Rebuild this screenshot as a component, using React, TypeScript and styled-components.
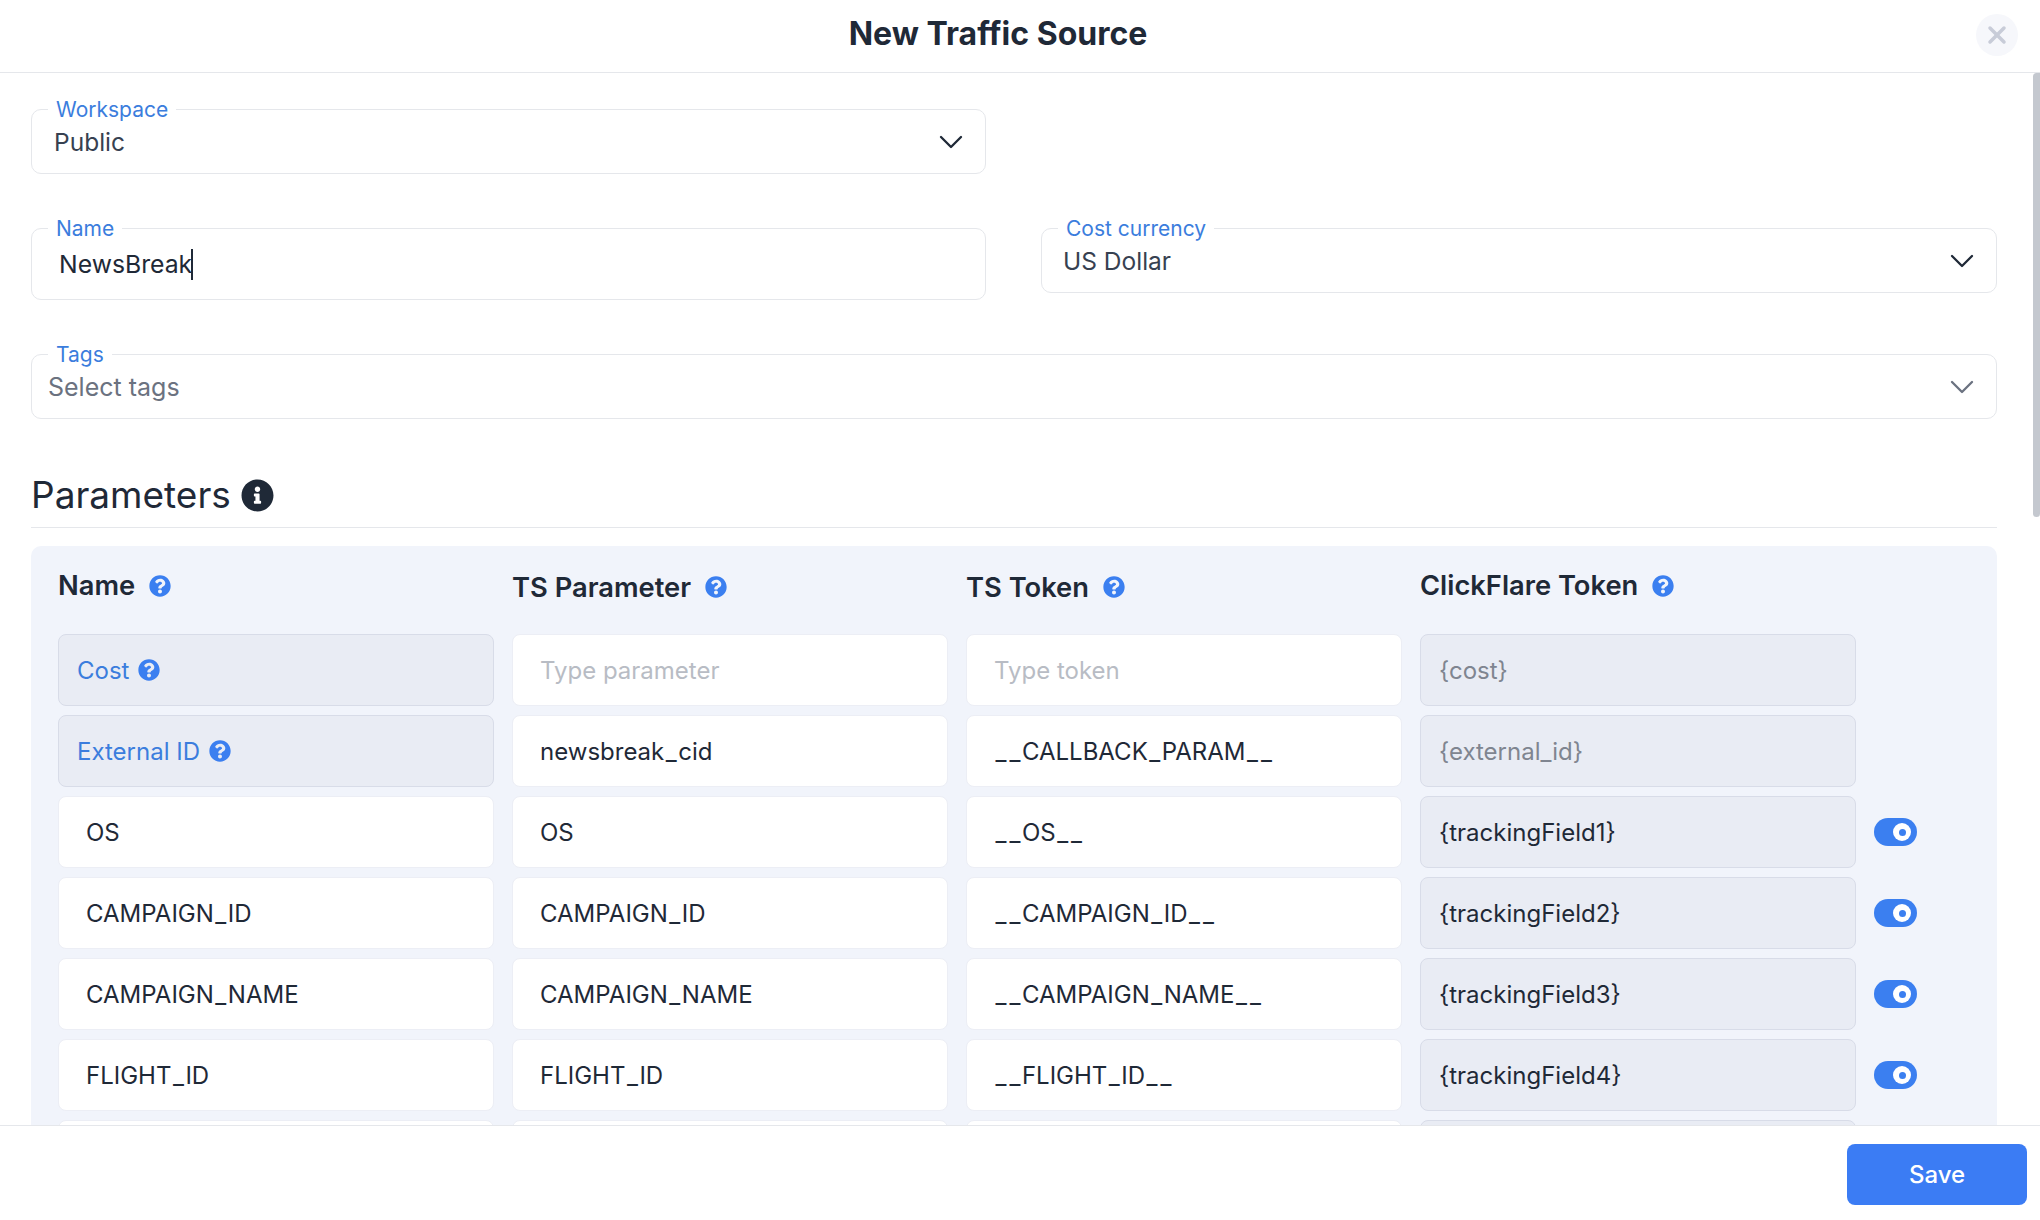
import { FC } from 'react';
import styled, { createGlobalStyle } from 'styled-components';
import { ChevronDown, X } from 'lucide-react';
import { FaInfoCircle, FaQuestionCircle } from 'react-icons/fa';

const GlobalStyle = createGlobalStyle`
  html, body {
    margin: 0;
    padding: 0;
    background: #ffffff;
  }
  * {
    box-sizing: border-box;
  }
  body {
    font-family: Inter, "Liberation Sans", sans-serif;
    color: #1f2937;
  }
`;

const Page = styled.div`
  display: flex;
  flex-direction: column;
  width: 2040px;
  height: 1220px;
  overflow: hidden;
  background: #ffffff;
`;

const Header = styled.header`
  position: relative;
  flex: none;
  display: flex;
  align-items: center;
  justify-content: center;
  height: 73px;
  padding: 0 44px 5px 0;
  border-bottom: 1px solid #e5e7eb;
`;

const Title = styled.h1`
  margin: 0;
  font-size: 32px;
  font-weight: 700;
  color: #1f2937;
`;

const CloseButton = styled.button`
  position: absolute;
  top: 14px;
  right: 22px;
  display: flex;
  align-items: center;
  justify-content: center;
  width: 42px;
  height: 42px;
  padding: 0;
  border: 0;
  border-radius: 50%;
  background: #f6f7fb;
  color: #c8ccd8;
`;

const Body = styled.main`
  position: relative;
  flex: 1;
  min-height: 0;
  overflow: hidden;
  padding: 36px 43px 0 31px;
`;

const ScrollThumb = styled.div`
  position: absolute;
  top: 0;
  right: 0;
  width: 7px;
  height: 444px;
  border-radius: 4px 0 4px 4px;
  background: #c4c8cf;
`;

const FormRow = styled.div<{ $gap?: number }>`
  display: grid;
  grid-template-columns: 955px 956px;
  column-gap: 55px;
  align-items: start;
  margin-bottom: ${(p) => p.$gap ?? 54}px;
`;

const Field = styled.div<{ $wide?: boolean; $height?: number }>`
  position: relative;
  display: flex;
  align-items: center;
  justify-content: space-between;
  height: ${(p) => p.$height ?? 65}px;
  padding: 0 14px 0 22px;
  border: 1px solid #e5e7eb;
  border-radius: 10px;
  background: #ffffff;
  grid-column: ${(p) => (p.$wide ? '1 / -1' : 'auto')};
`;

const FieldLabel = styled.label`
  position: absolute;
  top: -13px;
  left: 16px;
  padding: 0 8px;
  background: #ffffff;
  font-size: 21px;
  line-height: 26px;
  color: #3b7ddd;
`;

const FieldValue = styled.span<{ $muted?: boolean; $left?: number }>`
  margin-left: ${(p) => p.$left ?? 0}px;
  font-size: ${(p) => (p.$muted ? 25 : 24.5)}px;
  line-height: 30px;
  color: ${(p) => (p.$muted ? '#6b7280' : '#374151')};
`;

const TypedValue = styled.div`
  display: flex;
  align-items: center;
  margin-left: 5px;
  font-size: 24.75px;
  color: #1f2937;
`;

const Caret = styled.span`
  display: inline-block;
  width: 2px;
  height: 31px;
  margin-left: -1px;
  background: #1f2937;
`;

const Chevron = styled(ChevronDown)<{ $muted?: boolean }>`
  flex: none;
  color: ${(p) => (p.$muted ? '#6b7280' : '#1f2937')};
`;

const SectionTitle = styled.h2`
  display: flex;
  align-items: center;
  gap: 10px;
  margin: 0;
  padding: 0 0 7px;
  border-bottom: 1px solid #e5e7eb;
  font-size: 37px;
  line-height: 50px;
  font-weight: 400;
  color: #1f2937;
`;

const Panel = styled.section`
  display: grid;
  grid-template-columns: repeat(4, 436px) auto;
  column-gap: 18px;
  row-gap: 9px;
  margin-top: 18px;
  padding: 0 0 0 27px;
  border-radius: 10px;
  background: #f1f4fb;
`;

const ColumnHead = styled.div<{ $shift?: number }>`
  display: flex;
  align-items: center;
  gap: 14px;
  height: 79px;
  padding-top: ${(p) => p.$shift ?? 0}px;
  font-size: 27.3px;
  font-weight: 600;
  color: #1f2937;
`;

const HelpIcon = styled(FaQuestionCircle)`
  flex: none;
  color: #3b7ff0;
`;

const StaticCell = styled.div<{ $active?: boolean; $muted?: boolean }>`
  display: flex;
  align-items: center;
  gap: 9px;
  height: 72px;
  padding: 0 18px;
  border: 1px solid #d8dce8;
  border-radius: 8px;
  background: #e9ecf4;
  font-size: 24px;
  color: ${(p) => (p.$active ? '#3b7ddd' : p.$muted ? '#7f8590' : '#1f2937')};
`;

const InputCell = styled.div<{ $placeholder?: boolean }>`
  display: flex;
  align-items: center;
  height: 72px;
  padding: 0 27px;
  border: 1px solid #eceef5;
  border-radius: 8px;
  background: #ffffff;
  font-size: 24px;
  white-space: pre;
  color: ${(p) => (p.$placeholder ? '#b8bcc4' : '#1f2937')};
`;

const Underscore = styled.span`
  display: inline-block;
  padding: 0 1.5px;
`;

const ToggleSlot = styled.div`
  display: flex;
  align-items: center;
  height: 72px;
`;

const ToggleTrack = styled.div`
  display: flex;
  align-items: center;
  justify-content: flex-end;
  width: 43px;
  height: 28px;
  padding-right: 6px;
  border-radius: 14px;
  background: #3b7ff0;
`;

const ToggleKnob = styled.div`
  display: flex;
  align-items: center;
  justify-content: center;
  width: 18px;
  height: 18px;
  border-radius: 50%;
  background: #ffffff;

  &::after {
    content: '';
    width: 7px;
    height: 7px;
    border-radius: 50%;
    background: #3b7ff0;
  }
`;

const Footer = styled.footer`
  flex: none;
  display: flex;
  justify-content: flex-end;
  height: 95px;
  padding: 18px 13px 0 0;
  border-top: 1px solid #e5e7eb;
  background: #ffffff;
`;

const SaveButton = styled.button`
  width: 180px;
  height: 61px;
  border: 0;
  border-radius: 8px;
  background: #3b7cf4;
  font-family: inherit;
  font-size: 24px;
  font-weight: 500;
  color: #ffffff;
`;

interface IParam {
  name: string;
  parameter: string;
  token: string;
  field: string;
}

const columns = [
  { title: 'Name', shift: 0 },
  { title: 'TS Parameter', shift: 3 },
  { title: 'TS Token', shift: 3 },
  { title: 'ClickFlare Token', shift: 0 },
];

const params: IParam[] = [
  { name: 'OS', parameter: 'OS', token: '__OS__', field: '{trackingField1}' },
  { name: 'CAMPAIGN_ID', parameter: 'CAMPAIGN_ID', token: '__CAMPAIGN_ID__', field: '{trackingField2}' },
  { name: 'CAMPAIGN_NAME', parameter: 'CAMPAIGN_NAME', token: '__CAMPAIGN_NAME__', field: '{trackingField3}' },
  { name: 'FLIGHT_ID', parameter: 'FLIGHT_ID', token: '__FLIGHT_ID__', field: '{trackingField4}' },
  { name: '', parameter: '', token: '', field: '' },
];

// underscores run wider in the reference font than in ours
const Value: FC<{ text: string }> = ({ text }) => (
  <InputCell>
    {text.split(/(_)/).map((part, i) => (part === '_' ? <Underscore key={i}>_</Underscore> : part))}
  </InputCell>
);

const Toggle: FC = () => (
  <ToggleSlot>
    <ToggleTrack>
      <ToggleKnob />
    </ToggleTrack>
  </ToggleSlot>
);

export default function App() {
  return (
    <Page>
      <GlobalStyle />
      <Header>
        <Title>New Traffic Source</Title>
        <CloseButton aria-label="Close">
          <X size={28} strokeWidth={3} />
        </CloseButton>
      </Header>
      <Body>
        <ScrollThumb />
        <FormRow>
          <Field>
            <FieldLabel>Workspace</FieldLabel>
            <FieldValue>Public</FieldValue>
            <Chevron size={40} strokeWidth={1.4} />
          </Field>
        </FormRow>
        <FormRow>
          <Field $height={72}>
            <FieldLabel>Name</FieldLabel>
            <TypedValue>
              NewsBreak
              <Caret />
            </TypedValue>
          </Field>
          <Field>
            <FieldLabel>Cost currency</FieldLabel>
            <FieldValue $left={-1}>US Dollar</FieldValue>
            <Chevron size={40} strokeWidth={1.4} />
          </Field>
        </FormRow>
        <FormRow $gap={51}>
          <Field $wide>
            <FieldLabel>Tags</FieldLabel>
            <FieldValue $muted $left={-6}>Select tags</FieldValue>
            <Chevron size={40} strokeWidth={1.4} $muted />
          </Field>
        </FormRow>
        <SectionTitle>
          Parameters
          <FaInfoCircle size={33} />
        </SectionTitle>
        <Panel>
          {columns.map((col) => (
            <ColumnHead key={col.title} $shift={col.shift}>
              {col.title}
              <HelpIcon size={22} />
            </ColumnHead>
          ))}
          <span />

          <StaticCell $active>
            Cost
            <HelpIcon size={22} />
          </StaticCell>
          <InputCell $placeholder>Type parameter</InputCell>
          <InputCell $placeholder>Type token</InputCell>
          <StaticCell $muted>{'{cost}'}</StaticCell>
          <span />

          <StaticCell $active>
            External ID
            <HelpIcon size={22} />
          </StaticCell>
          <Value text="newsbreak_cid" />
          <Value text="__CALLBACK_PARAM__" />
          <StaticCell $muted>{'{external_id}'}</StaticCell>
          <span />

          {params.map((param, index) => (
            <div key={index} style={{ display: 'contents' }}>
              <Value text={param.name} />
              <Value text={param.parameter} />
              <Value text={param.token} />
              <StaticCell>{param.field}</StaticCell>
              <Toggle />
            </div>
          ))}
        </Panel>
      </Body>
      <Footer>
        <SaveButton>Save</SaveButton>
      </Footer>
    </Page>
  );
}
